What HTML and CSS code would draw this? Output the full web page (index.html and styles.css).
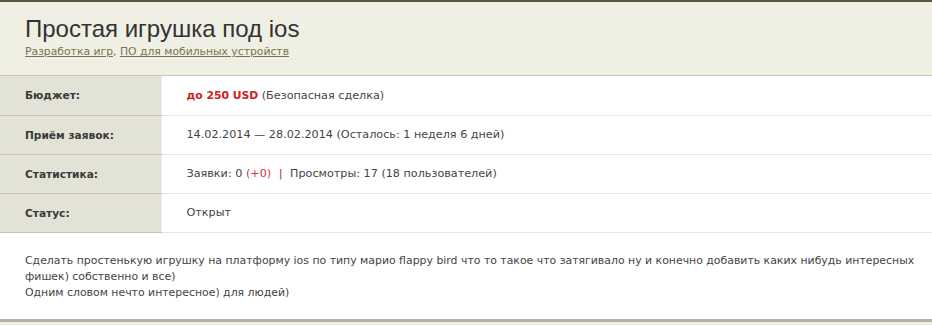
FILE: index.html
```html
<!DOCTYPE html>
<html lang="ru">
<head>
  <meta charset="UTF-8" />
  <title>Простая игрушка под ios</title>
  <link rel="stylesheet" href="styles.css">
</head>
<body>

<div class="project">
  <div class="project-head">
    <h1>Простая игрушка под ios</h1>
    <div class="cats">
      <a href="#">Разработка игр</a>, <a href="#">ПО для мобильных устройств</a>
    </div>
  </div>

  <table class="info">
    <tr>
      <th>Бюджет:</th>
      <td><b class="price">до 250 USD</b> (Безопасная сделка)</td>
    </tr>
    <tr>
      <th>Приём заявок:</th>
      <td>14.02.2014 — 28.02.2014 (Осталось: 1 неделя 6 дней)</td>
    </tr>
    <tr>
      <th>Статистика:</th>
      <td>Заявки: 0 <span class="plus">(+0)</span> <span class="sep">|</span> Просмотры: 17 (18 пользователей)</td>
    </tr>
    <tr>
      <th>Статус:</th>
      <td>Открыт</td>
    </tr>
  </table>

  <div class="descr">
    Сделать простенькую игрушку на платформу ios по типу марио flappy bird что то такое что затягивало ну и конечно добавить каких нибудь интересных фишек) собственно и все)<br>
    Одним словом нечто интересное) для людей)
  </div>
</div>

</body>
</html>
```

FILE: styles.css
```css
* {
  box-sizing: border-box;
  margin: 0;
  padding: 0;
}

body {
  font-family: Tahoma, "DejaVu Sans", sans-serif;
  font-size: 11.2px;
  color: #444;
  background: #f0efe4;
}

.project {
  border-top: 2px solid #58553a;
}

.project-head {
  height: 74px;
  padding: 13px 25px 0;
  background: #f0efe4;
  border-bottom: 1px solid #c9c6ac;
}

.project-head h1 {
  font-family: "Liberation Sans", Arial, sans-serif;
  font-weight: normal;
  font-size: 24px;
  line-height: 28px;
  color: #333;
}

.cats {
  margin-top: 2px;
  font-size: 10.8px;
  color: #7b7350;
}

.cats a {
  color: #7b7350;
}

.info {
  width: 100%;
  border-collapse: collapse;
  background: #fff;
}

.info th,
.info td {
  height: 39px;
  vertical-align: middle;
  text-align: left;
}

.info th {
  width: 161px;
  padding-left: 25px;
  background: #e3e2d6;
  border-right: 1px solid #eeede6;
  border-bottom: 1px solid #c9c6ac;
  font-size: 10.6px;
  font-weight: bold;
  color: #3a3a3a;
}

.info td {
  padding-left: 25px;
  border-bottom: 1px solid #e9e7dd;
}

.price {
  font-size: 10.8px;
  color: #cc2222;
}

.plus {
  color: #cc3344;
}

.sep {
  color: #993366;
  margin: 0 4px;
}

.descr {
  background: #fff;
  padding: 20px 8px 20px 25px;
  font-size: 10.9px;
  line-height: 16px;
  color: #444;
  border-bottom: 3px solid #b3b2a2;
  height: 89px;
}
```
